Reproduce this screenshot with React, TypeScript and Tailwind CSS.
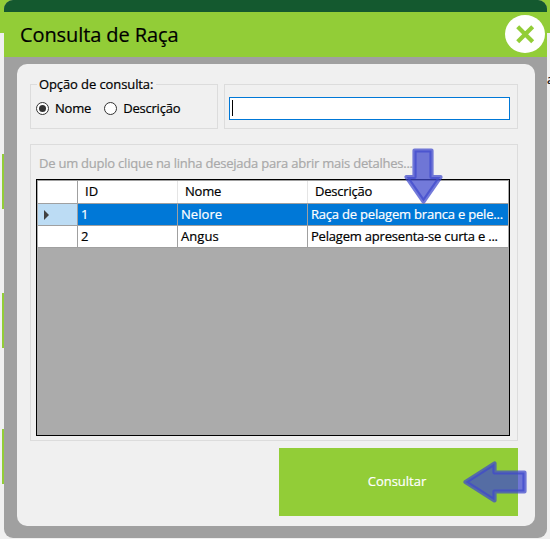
import React from "react";

type Row = { id: string; nome: string; descricao: string; selected?: boolean };

const rows: Row[] = [
  { id: "1", nome: "Nelore", descricao: "Raça de pelagem branca e pele...", selected: true },
  { id: "2", nome: "Angus", descricao: "Pelagem apresenta-se curta e ..." },
];

function Radio({ label, checked }: { label: string; checked?: boolean }) {
  return (
    <div className="flex items-center gap-[6px]">
      <div className="flex size-[13px] items-center justify-center rounded-full border border-[#333] bg-white">
        {checked && <div className="size-[7px] rounded-full bg-[#333]" />}
      </div>
      <span>{label}</span>
    </div>
  );
}

function GridRow({ row }: { row: Row }) {
  return (
    <div
      className={
        "flex h-[22px] border-b border-[#a0a0a0] leading-[20px] " +
        (row.selected ? "text-white" : "text-black")
      }
    >
      <div
        className={
          "flex w-10 items-center border-r border-[#a0a0a0] pl-[6px] " +
          (row.selected ? "bg-[#bcdcf4]" : "bg-white")
        }
      >
        {row.selected && (
          <svg width="5" height="10" viewBox="0 0 5 10">
            <path d="M0 0 5 5 0 10Z" fill="#404040" />
          </svg>
        )}
      </div>
      <div className={"flex flex-1 " + (row.selected ? "bg-[#0078d7]" : "bg-white")}>
        <div className="w-[100px] border-r border-[#a0a0a0] pl-[3px]">{row.id}</div>
        <div className="w-[130px] border-r border-[#a0a0a0] pl-[3px] tracking-[0.05px]">{row.nome}</div>
        <div className="flex-1 whitespace-nowrap pl-[3px] tracking-[-0.2px]">{row.descricao}</div>
      </div>
    </div>
  );
}

export default function App() {
  return (
    <div className="relative h-[539px] w-[550px] overflow-hidden bg-[#f0f0f0] font-['Open_Sans','Noto_Sans',sans-serif] text-[13px] text-black [-webkit-text-stroke:0.2px]">
      <div className="absolute inset-x-0 top-0 h-[33px] bg-[#92cd37]" />
      <div className="absolute left-[2px] top-[154px] h-[55px] w-[2px] bg-[#92cd37]" />
      <div className="absolute left-[2px] top-[293px] h-[55px] w-[2px] bg-[#92cd37]" />
      <div className="absolute left-[2px] top-[429px] h-[55px] w-[2px] bg-[#92cd37]" />
      <div className="absolute left-[547px] top-[72px] w-[3px] overflow-hidden leading-[14px]">a</div>

      <div className="relative ml-1 flex h-[538px] w-[543px] flex-col overflow-hidden rounded-[9px] bg-[#a0a0a0]">
        <div className="h-3 shrink-0 bg-[#14592f]" />
        <header className="flex h-[45px] shrink-0 items-center justify-between bg-[#92cd37] pl-4 pr-[2px]">
          <h1 className="text-[20px] leading-[44px] tracking-[-0.1px]">Consulta de Raça</h1>
          <svg width="40" height="39" viewBox="0 0 40 39">
            <ellipse cx="20" cy="19" rx="20" ry="19" fill="white" />
            <path d="m14.2 13.2 12 12m0-12-12 12" stroke="#92cd37" strokeWidth="4.2" strokeLinecap="square" />
          </svg>
        </header>

        <main className="ml-[13px] mt-[7px] flex h-[462px] w-[518px] flex-col rounded-[10px] bg-[#f0f0f0] pl-[13px] pr-[17px] pt-5">
          <div className="flex gap-[6px]">
            <section className="h-[45px] w-[188px] border border-[#dcdcdc]">
              <div className="ml-[6px] mt-[-11px] w-[119px] whitespace-nowrap bg-[#f0f0f0] pl-[2px] leading-5 tracking-[-0.1px]">
                Opção de consulta:
              </div>
              <div className="ml-[5px] mt-1 flex gap-[13px] leading-5 tracking-[-0.2px]">
                <Radio label="Nome" checked />
                <Radio label="Descrição" />
              </div>
            </section>
            <section className="h-[45px] w-[294px] border border-[#dcdcdc] pl-1 pt-3">
              <div className="h-[23px] w-[281px] border border-[#0078d7] bg-white pl-[2px] pt-[2px]">
                <div className="h-4 w-px bg-black" />
              </div>
            </section>
          </div>

          <section className="mt-[15px] h-[297px] w-[488px] border border-[#dcdcdc] pl-[5px]">
            <p className="h-[34px] whitespace-nowrap pl-[3px] pt-2 leading-5 tracking-[-0.23px] text-[#a9a9a9]">
              De um duplo clique na linha desejada para abrir mais detalhes...
            </p>
            <div className="h-[257px] w-[474px] border border-black bg-[#ababab]">
              <div className="w-[471px] border-t border-[#a0a0a0] pl-px">
                <div className="flex h-[23px] border-b border-[#a0a0a0] bg-white leading-[21px]">
                  <div className="w-10 border-r border-[#a0a0a0]" />
                  <div className="w-[100px] border-r border-[#e5e5e5] pl-[7px]">ID</div>
                  <div className="w-[130px] border-r border-[#e5e5e5] pl-[7px] tracking-[-0.2px]">Nome</div>
                  <div className="pl-[7px] tracking-[-0.2px]">Descrição</div>
                </div>
                {rows.map((row) => (
                  <GridRow key={row.id} row={row} />
                ))}
              </div>
            </div>
          </section>

          <button className="ml-auto mt-[7px] h-[68px] w-[239px] bg-[#92cd37] pl-px pr-1 text-[13px] text-white">
            Consultar
          </button>
        </main>
      </div>

      <svg className="pointer-events-none absolute left-0 top-0" width="550" height="539" viewBox="0 0 550 539">
        <g fill="#3f48cc" stroke="#3f48cc" fillOpacity=".73" strokeOpacity=".73" strokeWidth="4.2" strokeLinejoin="round">
          <path d="M414.5 150.5h17v26.5h9L423.5 201.5 406.5 177h8Z" />
          <path d="M465.5 482 494.5 463.5v9h30v19h-30v9Z" />
        </g>
      </svg>
    </div>
  );
}
